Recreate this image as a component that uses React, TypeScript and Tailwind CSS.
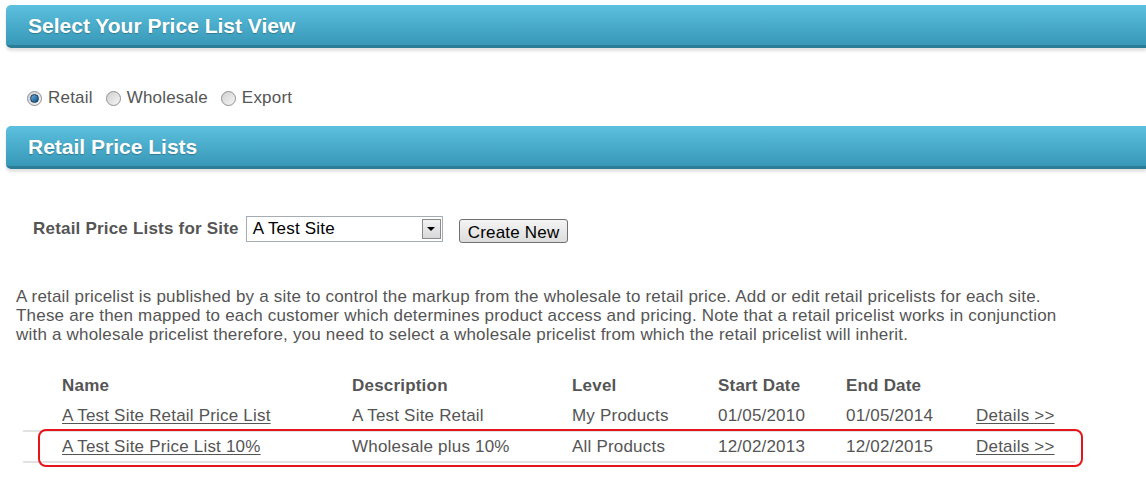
const font = { fontFamily: '"Liberation Sans", Arial, sans-serif' };

const Bar = ({ title }: { title: string }) => (
  <div className="ml-[6px] h-[43px] flex items-center pl-[22px] pt-[2px] rounded-l-[5px] bg-gradient-to-b from-[#5cc0de] to-[#3798b7] border-b-[3px] border-[#2b7d96] shadow-[0_3px_3px_rgba(0,0,0,0.12)]">
    <h2 className="text-white font-bold text-[21px] tracking-normal [text-shadow:0_1px_1px_rgba(0,0,0,0.25)]">{title}</h2>
  </div>
);

const Radio = ({ label, checked }: { label: string; checked?: boolean }) => (
  <label className="flex items-center gap-[6px] mr-[13px]">
    <span className="w-[15px] h-[15px] rounded-full border border-[#8e8f8f] bg-gradient-to-br from-[#d0d0d0] to-[#f6f6f6] flex items-center justify-center">
      {checked && <span className="w-[9px] h-[9px] rounded-full bg-gradient-to-br from-[#6ab4e4] to-[#0e4d7e] border border-[#153a5c]" />}
    </span>
    <span>{label}</span>
  </label>
);

const cols = "grid grid-cols-[290px_220px_146px_128px_130px_1fr] items-center pl-[39px]";

const rows = [
  ["A Test Site Retail Price List", "A Test Site Retail", "My Products", "01/05/2010", "01/05/2014"],
  ["A Test Site Price List 10%", "Wholesale plus 10%", "All Products", "12/02/2013", "12/02/2015"],
];

export default function App() {
  return (
    <div style={font} className="w-[1146px] h-[478px] bg-white text-[#555] text-[17px] tracking-[0.2px] overflow-hidden pt-[5px]">
      <Bar title="Select Your Price List View" />
      <div className="flex items-center h-[30px] mt-[35px] ml-[27px]">
        <Radio label="Retail" checked />
        <Radio label="Wholesale" />
        <Radio label="Export" />
      </div>
      <div className="mt-[13px]">
        <Bar title="Retail Price Lists" />
      </div>
      <div className="flex items-center ml-[33px] mt-[47px] h-[26px]">
        <span className="font-bold mr-[7px]">Retail Price Lists for Site</span>
        <div className="w-[197px] h-[26px] border border-[#a5acb5] flex items-center justify-between pl-[6px] pr-[1px] text-black">
          <span>A Test Site</span>
          <span className="w-[19px] h-[20px] border border-[#8a8a8a] bg-gradient-to-b from-[#f2f2f2] to-[#d8d8d8] flex items-center justify-center">
            <span className="w-0 h-0 border-l-[4px] border-r-[4px] border-t-[4px] border-l-transparent border-r-transparent border-t-black" />
          </span>
        </div>
        <button className="ml-[16px] mt-[4px] h-[24px] px-[8px] border border-[#707070] rounded-[3px] bg-gradient-to-b from-[#f4f4f4] to-[#dcdcdc] text-black">Create New</button>
      </div>
      <p className="ml-[16px] mt-[45px] leading-[19px] w-[1100px]">
        A retail pricelist is published by a site to control the markup from the wholesale to retail price. Add or edit retail pricelists for each site.
        <br />
        These are then mapped to each customer which determines product access and pricing. Note that a retail pricelist works in conjunction
        <br />
        with a wholesale pricelist therefore, you need to select a wholesale pricelist from which the retail pricelist will inherit.
      </p>
      <div className="relative ml-[23px] mt-[27px] w-[1052px]">
        <div className={`${cols} h-[30px] font-bold`}>
          <span>Name</span>
          <span>Description</span>
          <span>Level</span>
          <span>Start Date</span>
          <span>End Date</span>
          <span />
        </div>
        {rows.map((r) => (
          <div key={r[0]} className={`${cols} h-[31px] border-b-2 border-[#e2e2e2]`}>
            <a className="underline decoration-1 underline-offset-2">{r[0]}</a>
            <span>{r[1]}</span>
            <span>{r[2]}</span>
            <span>{r[3]}</span>
            <span>{r[4]}</span>
            <a className="underline decoration-1 underline-offset-2">Details &gt;&gt;</a>
          </div>
        ))}
        <div className="absolute left-[15px] top-[58px] w-[1045px] h-[38px] border-2 border-[#e8141b] rounded-[8px] pointer-events-none" />
      </div>
    </div>
  );
}
